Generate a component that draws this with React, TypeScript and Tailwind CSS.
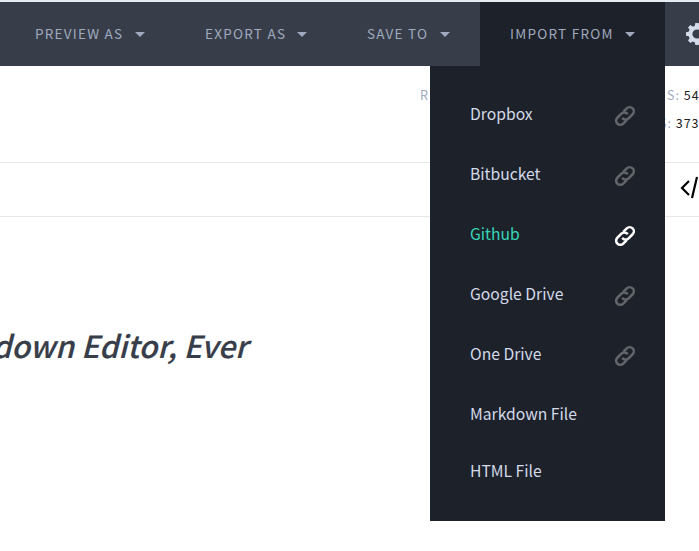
import type { ReactNode } from "react";

function Caret() {
  return (
    <svg width="10" height="5" viewBox="0 0 10 5" className="shrink-0 fill-[#a0aabf]">
      <path d="M0 0h10L5 5z" />
    </svg>
  );
}

function LinkIcon({ active }: { active?: boolean }) {
  return (
    <svg
      width="24"
      height="24"
      viewBox="0 0 22 22"
      fill="none"
      strokeWidth="2.3"
      strokeLinejoin="round"
      className={active ? "stroke-white" : "stroke-[#62656a]"}
    >
      <path d="M9.4 7.2 12.6 4a3.8 3.8 0 0 1 5.4 5.4l-3.7 3.7a3.8 3.8 0 0 1-5.4 0l-.4-.5" />
      <path d="M12.6 14.8 9.4 18a3.8 3.8 0 0 1-5.4-5.4l3.7-3.7a3.8 3.8 0 0 1 5.4 0l.4.5" />
    </svg>
  );
}

const teeth = [0, 45, 90, 135, 180, 225, 270, 315];

function GearIcon() {
  return (
    <svg width="22" height="22" viewBox="0 0 22 22" className="shrink-0 text-[#d3daea]">
      <circle cx="11" cy="11" r="6.6" fill="none" stroke="currentColor" strokeWidth="4" />
      {teeth.map((angle) => (
        <path key={angle} d="M8.6 4 9.3 0h3.4l.7 4z" fill="currentColor" transform={`rotate(${angle} 11 11)`} />
      ))}
    </svg>
  );
}

function NavItem({ width, active, children }: { width: string; active?: boolean; children: ReactNode }) {
  return (
    <button
      className={`flex h-full shrink-0 items-center justify-between px-[30px] text-[13.5px] tracking-[1.25px] text-[#a0aabf] ${width} ${active ? "bg-[#1d2129]" : ""}`}
    >
      <span className="pb-px whitespace-nowrap">{children}</span>
      <Caret />
    </button>
  );
}

const services = ["Dropbox", "Bitbucket", "Github", "Google Drive", "One Drive"];

export default function App() {
  return (
    <div className="relative h-[551px] w-[699px] overflow-hidden bg-white font-['Noto_Sans_CJK_SC',sans-serif]">
      <div className="h-[2px] bg-[#e6ecef]" />
      <header className="flex h-16 bg-[#373d49] pl-[5px]">
        <NavItem width="w-[170px]">PREVIEW AS</NavItem>
        <NavItem width="w-[162px]">EXPORT AS</NavItem>
        <NavItem width="w-[143px]">SAVE TO</NavItem>
        <NavItem width="w-[185px]" active>IMPORT FROM</NavItem>
        <div className="flex items-center pl-[21px]">
          <GearIcon />
        </div>
      </header>
      <section className="flex h-[97px] justify-between border-b border-[#e8e8e8] pt-[15px] pl-[420px] text-[12.5px] leading-7 tracking-[1px] text-[#a0aabf]">
        <span>R</span>
        <div className="w-[42px] whitespace-nowrap">
          <div className="pl-[10px]">S: <span className="text-[#222]">54</span></div>
          <div className="pl-[2px]">S: <span className="text-[#222]">373</span></div>
        </div>
      </section>
      <section className="flex h-[54px] items-center border-b border-[#e8e8e8] pb-[3px] pl-[680px]">
        <svg width="30" height="24" viewBox="0 0 30 24" fill="none" strokeWidth="2.2" className="shrink-0 stroke-black">
          <path d="M9 5 2 12l7 7M17 1l-5 21M21 5l7 7-7 7" />
        </svg>
      </section>
      <h1 className="-ml-2 pt-[103px] text-[30.5px] leading-[50px] font-medium whitespace-nowrap text-[#373d49] italic [-webkit-text-stroke:0.2px_#373d49]">
        down Editor, Ever
      </h1>
      <ul className="absolute top-[66px] left-[430px] h-[455px] w-[235px] bg-[#1d2129] pt-[18px] text-[15.7px] text-[#d3daea]">
        {services.map((name) => (
          <li key={name} className="flex h-[60px] items-center justify-between pr-7 pl-10">
            <span className={name === "Github" ? "text-[#35d7bb]" : ""}>{name}</span>
            <span className="pt-1"><LinkIcon active={name === "Github"} /></span>
          </li>
        ))}
        <li className="flex h-[60px] items-center pl-10">Markdown File</li>
        <li className="flex h-[54px] items-center pl-10">HTML File</li>
      </ul>
    </div>
  );
}
